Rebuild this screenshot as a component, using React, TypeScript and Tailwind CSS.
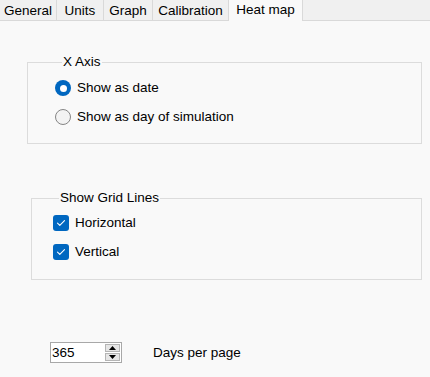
import React from 'react';

const tabs = [
  { label: 'General', w: 'w-[57px]' },
  { label: 'Units', w: 'w-[47px]' },
  { label: 'Graph', w: 'w-[49px]' },
  { label: 'Calibration', w: 'w-[76px]' },
];

const Radio = ({ checked, label }: { checked: boolean; label: string }) => (
  <label className="flex h-[16px] items-center">
    {checked ? (
      <span className="flex h-[16px] w-[16px] items-center justify-center rounded-full bg-[#0067c0]">
        <span className="h-[7px] w-[7px] rounded-full bg-white" />
      </span>
    ) : (
      <span className="h-[16px] w-[16px] rounded-full border border-[#858585] bg-[#f3f3f3]" />
    )}
    <span className="ml-[6px]">{label}</span>
  </label>
);

const Check = ({ label }: { label: string }) => (
  <label className="flex h-[16px] items-center">
    <span className="flex h-[16px] w-[16px] items-center justify-center rounded-[3px] bg-[#0067c0]">
      <svg width="10" height="8" viewBox="0 0 10 8" fill="none">
        <path d="M1.5 4.2 L3.8 6.3 L8.5 1.6" stroke="white" strokeWidth="1.1" strokeLinecap="round" strokeLinejoin="round" />
      </svg>
    </span>
    <span className="ml-[6px]">{label}</span>
  </label>
);

export default function App() {
  return (
    <div className="h-[377px] w-[430px] overflow-hidden bg-[#f9f9f9] text-[13.5px] leading-[16px] text-black [font-family:'Liberation_Sans',Arial,sans-serif]">
      {/* tab strip */}
      <div className="flex h-[21px]">
        {tabs.map((t) => (
          <div
            key={t.label}
            className={`${t.w} flex h-[21px] items-center justify-center border-r border-b border-[#d9d9d9] bg-[#f0f0f0] pt-[1px]`}
          >
            {t.label}
          </div>
        ))}
        <div className="flex h-[21px] w-[73px] items-center justify-center bg-[#f9f9f9] pb-[1px]">Heat map</div>
        <div className="h-[21px] flex-1 border-l border-b border-[#d9d9d9] bg-[#f0f0f0]" />
      </div>

      <fieldset className="ml-[27px] mt-[33px] w-[395px] border border-[#dcdcdc] pb-[18px] pl-[27px]">
        <legend className="ml-[7px] px-[1px] leading-[16px]">X Axis</legend>
        <div className="flex flex-col gap-[13px] pt-[10px]">
          <Radio checked label="Show as date" />
          <Radio checked={false} label="Show as day of simulation" />
        </div>
      </fieldset>

      <fieldset className="ml-[31px] mt-[46px] w-[391px] border border-[#dcdcdc] pb-[19px] pl-[21px]">
        <legend className="ml-[6px] px-[1px] leading-[16px]">Show Grid Lines</legend>
        <div className="flex flex-col gap-[13px] pt-[9px]">
          <Check label="Horizontal" />
          <Check label="Vertical" />
        </div>
      </fieldset>

      <div className="ml-[50px] mt-[62px] flex items-center">
        <div className="flex h-[21px] w-[72px] items-center border border-[#a8a8a8] bg-white pl-[1px] pr-[1px]">
          <span className="flex-1">365</span>
          <div className="flex h-[17px] w-[15px] flex-col gap-[1px]">
            <div className="flex flex-1 items-center justify-center border border-[#b5b5b5] bg-[#e6e6e6]">
              <svg width="7" height="4" viewBox="0 0 7 4"><path d="M0 4 L3.5 0 L7 4 Z" fill="black" /></svg>
            </div>
            <div className="flex flex-1 items-center justify-center border border-[#b5b5b5] bg-[#e6e6e6]">
              <svg width="7" height="4" viewBox="0 0 7 4"><path d="M0 0 L7 0 L3.5 4 Z" fill="black" /></svg>
            </div>
          </div>
        </div>
        <span className="ml-[31px]">Days per page</span>
      </div>
    </div>
  );
}
